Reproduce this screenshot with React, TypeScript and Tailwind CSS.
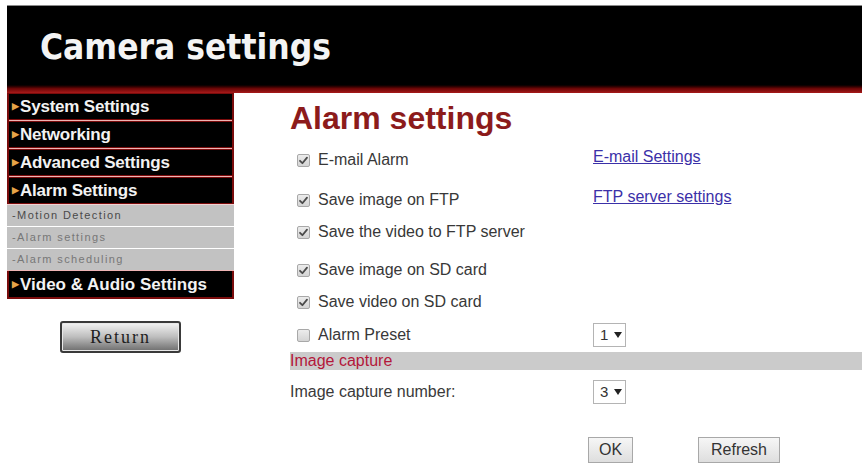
import React from "react";

const Check = ({ checked }: { checked: boolean }) => (
  <div className="w-[13px] h-[13px] rounded-[2px] border border-[#a8a8a8] bg-gradient-to-b from-[#ececec] to-[#d4d4d4] flex items-center justify-center">
    {checked && (
      <svg width="11" height="11" viewBox="0 0 11 11">
        <path d="M2 5.8 L4.4 8.2 L9 2.6" fill="none" stroke="#4a4a4a" strokeWidth="1.8" strokeLinecap="round" strokeLinejoin="round" />
      </svg>
    )}
  </div>
);

const Sel = ({ v }: { v: string }) => (
  <div className="w-[33px] h-[24px] border border-[#b4b4b4] bg-white flex items-center pl-[6px] gap-[6px] text-[15px] text-[#333]">
    <span>{v}</span>
    <svg width="8" height="6" viewBox="0 0 8 6"><path d="M0 0 L8 0 L4 6 Z" fill="#222" /></svg>
  </div>
);

const MenuRow = ({ label, big }: { label: string; big?: boolean }) => (
  <div className={`h-[27px] bg-black border-y border-[#7a0c0c] flex items-center pl-[3px] ${big ? "text-[17px]" : "text-[17px]"} font-bold text-[#f2f2f2] leading-none`}>
    <span className="text-[#e8a347] text-[9px] mr-[1px]">▶</span>
    <span className="tracking-[-0.2px]">{label}</span>
  </div>
);

const SubRow = ({ label, dark }: { label: string; dark?: boolean }) => (
  <div className={`h-[21px] bg-[#c2c2c2] flex items-center pl-[5px] text-[11px] tracking-[1.4px] ${dark ? "text-[#4a4a4a]" : "text-[#777]"}`}>
    {label}
  </div>
);

const CbRow = ({ h, checked, label, link }: { h: string; checked: boolean; label: string; link?: React.ReactNode }) => (
  <div className={`flex ${h}`}>
    <div className="w-[303px] flex items-center pl-[7px] gap-[8px]">
      <Check checked={checked} />
      <span className="text-[16px] text-[#383838]">{label}</span>
    </div>
    <div className="flex items-center">{link}</div>
  </div>
);

export default function App() {
  return (
    <div className="w-[862px] h-[470px] bg-white overflow-hidden" style={{ fontFamily: '"Liberation Sans", Arial, sans-serif' }}>
      <div className="ml-[7px] mt-[5px] border-t border-[#8a8a8a]">
        <div className="h-[78px] bg-black flex items-center pl-[33px] pt-[4px]">
          <span
            className="text-[35px] font-bold text-[#f4f4f4] tracking-[0px]"
            style={{ fontFamily: '"DejaVu Sans Condensed", "DejaVu Sans", sans-serif', fontStretch: "condensed" }}
          >
            Camera settings
          </span>
        </div>
        <div className="h-[9px] bg-gradient-to-b from-black via-[#6a0606] to-[#a81a1a]" />
      </div>
      <div className="flex">
        <div className="ml-[7px] w-[227px] flex flex-col">
          <div className="border-x-2 border-[#7a0c0c] flex flex-col">
            <MenuRow label="System Settings" />
            <div className="h-px bg-[#eeb4b4]" />
            <MenuRow label="Networking" />
            <div className="h-px bg-[#eeb4b4]" />
            <MenuRow label="Advanced Settings" />
            <div className="h-px bg-[#eeb4b4]" />
            <MenuRow label="Alarm Settings" />
          </div>
          <div className="h-px bg-[#f2d2d2]" />
          <SubRow label="-Motion Detection" dark />
          <div className="h-px bg-white" />
          <SubRow label="-Alarm settings" />
          <div className="h-px bg-white" />
          <SubRow label="-Alarm scheduling" />
          <div className="h-px bg-[#eeb4b4]" />
          <div className="border-x-2 border-b-2 border-[#7a0c0c]">
            <div className="h-[26px] bg-black flex items-center pl-[3px] text-[17px] font-bold text-[#f2f2f2] leading-none">
              <span className="text-[#e8a347] text-[9px] mr-[1px]">▶</span>
              <span>Video &amp; Audio Settings</span>
            </div>
          </div>
          <div className="flex justify-center mt-[22px]">
            <div className="w-[121px] h-[32px] rounded-[3px] border-2 border-[#3a3a3a] bg-gradient-to-b from-[#f4f4f4] via-[#bdbdbd] to-[#6e6e6e] flex items-center justify-center shadow-[inset_0_0_0_1px_#e8e8e8]">
              <span className="text-[18px] tracking-[2px] text-[#1e1e1e]" style={{ fontFamily: '"Liberation Serif", "Times New Roman", serif' }}>
                Return
              </span>
            </div>
          </div>
        </div>
        <div className="ml-[56px] flex-1 flex flex-col pt-[7px]">
          <div className="h-[36px] text-[32px] leading-[36px] font-bold text-[#8c1b1b]">Alarm settings</div>
          <CbRow
            h="h-[48px]"
            checked
            label="E-mail Alarm"
            link={<span className="text-[16px] text-[#3b30a8] underline -mt-[6px]">E-mail Settings</span>}
          />
          <CbRow
            h="h-[32px]"
            checked
            label="Save image on FTP"
            link={<span className="text-[16px] text-[#3b30a8] underline -mt-[6px]">FTP server settings</span>}
          />
          <CbRow h="h-[32px]" checked label="Save the video to FTP server" />
          <div className="h-[6px]" />
          <CbRow h="h-[32px]" checked label="Save image on SD card" />
          <CbRow h="h-[32px]" checked label="Save video on SD card" />
          <CbRow h="h-[34px]" checked={false} label="Alarm Preset" link={<Sel v="1" />} />
          <div className="h-[18px] bg-[#cbcbcb] flex items-center text-[16px] text-[#b3173a]">Image capture</div>
          <div className="flex h-[44px]">
            <div className="w-[303px] flex items-center text-[16px] text-[#3a3a3a]">Image capture number:</div>
            <div className="flex items-center">
              <Sel v="3" />
            </div>
          </div>
          <div className="h-[23px]" />
          <div className="flex h-[26px]">
            <div className="w-[298px]" />
            <div className="w-[45px] h-[26px] border border-[#a8a8a8] bg-gradient-to-b from-[#f6f6f6] to-[#dedede] flex items-center justify-center text-[16px] text-[#333]">
              OK
            </div>
            <div className="w-[65px]" />
            <div className="w-[82px] h-[26px] border border-[#a8a8a8] bg-gradient-to-b from-[#f6f6f6] to-[#dedede] flex items-center justify-center text-[16px] text-[#333]">
              Refresh
            </div>
          </div>
        </div>
      </div>
    </div>
  );
}
